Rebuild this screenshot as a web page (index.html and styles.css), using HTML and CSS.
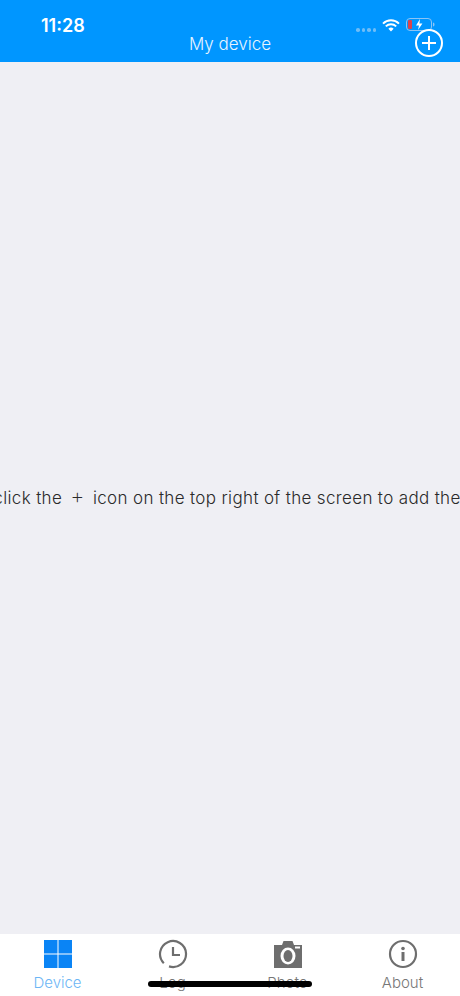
FILE: index.html
```html
<!DOCTYPE html>
<html lang="en">
<head>
<meta charset="utf-8">
<title>My device</title>
<link rel="stylesheet" href="styles.css">
</head>
<body>
<div class="app">
  <header class="header">
    <div class="status">
      <span class="time">11:28</span>
      <div class="status-right">
        <span class="dots"><i></i><i></i><i></i><i></i></span>
        <svg class="wifi" width="18" height="13" viewBox="0 0 18 13"><path d="M1 4.600a11.500 11.500 0 0 1 16 0" fill="none" stroke="#fff" stroke-width="2"/><path d="M3.800 7.400a7.500 7.500 0 0 1 10.400 0" fill="none" stroke="#fff" stroke-width="2"/><path d="M6.400 9.800a3.600 3.600 0 0 1 5.200 0L9 12.600z" fill="#fff"/></svg>
        <svg class="battery" width="30" height="14" viewBox="0 0 30 14"><rect x="0.500" y="0.500" width="25" height="12" rx="3.500" fill="none" stroke="#8cc4f5"/><rect x="2" y="2" width="4" height="9" rx="1" fill="#d9434e"/><path d="M14 1l-4 6.500h3L12 12l4.400-6.500h-3z" fill="#fff"/><path d="M27 4.500c1 .3 1.500 1 1.500 2s-.5 1.700-1.500 2z" fill="#8cc4f5"/></svg>
      </div>
    </div>
    <div class="titlebar">
      <h1 class="title">My device</h1>
      <svg class="add" width="30" height="30" viewBox="0 0 30 30"><circle cx="15" cy="15" r="13" fill="none" stroke="#fff" stroke-width="2"/><path d="M15 8v14M8 15h14" stroke="#fff" stroke-width="2" fill="none"/></svg>
    </div>
  </header>
  <main class="content">
    <p class="hint">click the <span class="plus">+</span> icon on the top right of the screen to add the</p>
  </main>
  <nav class="tabs">
    <div class="tab active">
      <svg class="icon" width="30" height="30" viewBox="0 0 30 30"><path d="M1 1h13.500v13.500H1zM15.500 1H29v13.500H15.500zM1 15.500h13.500V29H1zM15.500 15.500H29V29H15.500z" fill="#0a84f5"/></svg>
      <span>Device</span>
    </div>
    <div class="tab">
      <svg class="icon" width="30" height="30" viewBox="0 0 30 30"><path d="M5.800 24.200A13 13 0 1 1 11 27.400" fill="none" stroke="#6e6e6e" stroke-width="2.200"/><path d="M15 8v8h7" fill="none" stroke="#6e6e6e" stroke-width="2.200"/></svg>
      <span>Log</span>
    </div>
    <div class="tab">
      <svg class="icon" width="30" height="30" viewBox="0 0 30 30"><path d="M1 6h8l1.500-4h9L21 6h8v23H1z" fill="#6e6e6e"/><ellipse cx="15" cy="17" rx="7.500" ry="8.500" fill="#fff"/><ellipse cx="15" cy="17" rx="4.500" ry="6" fill="#6e6e6e"/><rect x="22" y="7.500" width="5" height="2" fill="#fff"/></svg>
      <span>Photo</span>
    </div>
    <div class="tab">
      <svg class="icon" width="30" height="30" viewBox="0 0 30 30"><circle cx="15" cy="15" r="13" fill="none" stroke="#6e6e6e" stroke-width="2.200"/><circle cx="15" cy="9.500" r="1.800" fill="#6e6e6e"/><path d="M15 13v9" stroke="#6e6e6e" stroke-width="3" fill="none"/></svg>
      <span>About</span>
    </div>
  </nav>
  <div class="home-bar"></div>
</div>
</body>
</html>
```
FILE: styles.css
```css
* { box-sizing: border-box; }
html, body { margin: 0; padding: 0; height: 100%; }
body { font-family: Inter, "Liberation Sans", sans-serif; background: #efeff4; overflow: hidden; }
.app { position: relative; width: 460px; height: 996px; display: flex; flex-direction: column; overflow: hidden; }
.header { height: 62px; flex: none; background: #0096ff; display: flex; flex-direction: column; color: #fff; }
.status { height: 34px; padding: 18px 24px 0 41px; display: flex; justify-content: space-between; align-items: center; }
.time { font-size: 18px; font-weight: 600; line-height: 16px; }
.status-right { display: flex; align-items: center; gap: 6px; margin-top: -2px; }
.dots { display: flex; gap: 2px; margin-top: 10px; }
.dots i { width: 3.500px; height: 3.500px; border-radius: 50%; background: #6fbdf7; }
.titlebar { position: relative; flex: 1; display: flex; justify-content: center; align-items: center; padding-bottom: 16px; }
.title { margin: 0; font-size: 17px; font-weight: 300; line-height: 20px; color: #e6f4ff; }
.add { position: absolute; right: 16px; top: -6px; }
.content { flex: 1; display: flex; justify-content: center; align-items: center; overflow: hidden; padding-right: 6px; }
.hint { margin: 0; white-space: nowrap; flex: none; font-size: 17px; letter-spacing: 0.350px; font-weight: 300; line-height: 24px; color: #2a2a2a; }
.plus { margin: 0 3px; font-size: 22px; font-weight: 200; line-height: 20px; }
.tabs { height: 62px; flex: none; background: #fff; display: grid; grid-template-columns: repeat(4, 1fr); padding-top: 5px; }
.tab { display: flex; flex-direction: column; align-items: center; color: #777; font-size: 15px; font-weight: 300; line-height: 18px; gap: 5px; }
.tab.active { color: #6cb6f5; }
.home-bar { position: absolute; left: 148px; bottom: 9px; width: 164px; height: 6px; border-radius: 3px; background: #000; }
```
